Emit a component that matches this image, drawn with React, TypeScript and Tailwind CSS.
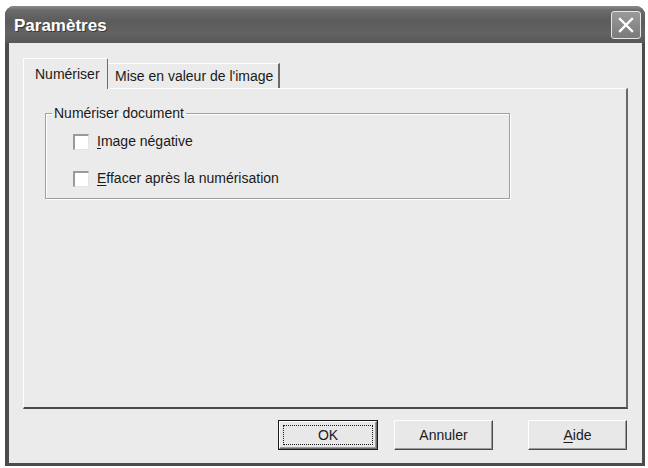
import React from 'react';

const FONT = { fontFamily: '"Liberation Sans", Arial, sans-serif' };

function CheckRow({ mnemonic, rest }: { mnemonic: string; rest: string }) {
  return (
    <div className="flex items-center h-[17px]">
      <div className="w-[16px] h-[16px] bg-white border-t-[2px] border-l-[2px] border-[#9a9a9a] border-r border-b border-r-[#e4e4e4] border-b-[#e4e4e4]" />
      <span className="ml-[8px] text-[14px] leading-[17px] text-[#1a1a1a]">
        <span className="underline underline-offset-2">{mnemonic}</span>
        {rest}
      </span>
    </div>
  );
}

function Button({
  children,
  width,
  isDefault,
}: {
  children: React.ReactNode;
  width: string;
  isDefault?: boolean;
}) {
  if (isDefault) {
    return (
      <div className={`${width} h-[30px] border border-[#1a1a1a] flex`}>
        <div className="flex-1 flex border-t border-l border-white border-r border-b border-r-[#6a6a6a] border-b-[#6a6a6a] bg-[#e8e8e8] shadow-[inset_-1px_-1px_0_#9c9c9c]">
          <div className="flex-1 m-[3px] border border-dotted border-[#1a1a1a] flex items-center justify-center text-[14px] text-[#1a1a1a]">
            {children}
          </div>
        </div>
      </div>
    );
  }
  return (
    <div
      className={`${width} h-[30px] flex items-center justify-center text-[14px] text-[#1a1a1a] bg-[#e8e8e8] border-t border-l border-white border-r border-b border-r-[#4a4a4a] border-b-[#4a4a4a] shadow-[inset_-1px_-1px_0_#9c9c9c]`}
    >
      {children}
    </div>
  );
}

export default function App() {
  return (
    <div className="w-[648px] h-[468px] bg-white pt-[6px] pl-[5px]" style={FONT}>
      <div className="w-[640px] h-[460px] flex flex-col rounded-t-[9px] overflow-hidden bg-[#474747]">
        {/* title bar */}
        <div className="h-[37px] flex items-center justify-between pl-[9px] pr-[4px] bg-[linear-gradient(to_bottom,#8c8c8c_0%,#6a6a6a_12%,#5c5c5c_40%,#626262_75%,#575757_100%)]">
          <span className="text-[17px] font-bold text-white pt-[3px] [text-shadow:1px_1px_0_#3a3a3a]">
            Paramètres
          </span>
          <div className="w-[30px] h-[28px] rounded-[3px] border border-[#e6e6e6] bg-[linear-gradient(to_bottom,#9a9a9a,#7a7a7a)] flex items-center justify-center">
            <svg width="16" height="16" viewBox="0 0 16 16">
              <path d="M2 2 L14 14 M14 2 L2 14" stroke="white" strokeWidth="2.4" strokeLinecap="square" />
            </svg>
          </div>
        </div>

        {/* body */}
        <div className="flex-1 bg-[#ebebeb] border-l-[4px] border-r-[3px] border-b-[3px] border-[#4c4c4c] pl-[14px] pt-[15px]">
          <div className="w-[605px] flex flex-col">
            {/* tabs */}
            <div className="flex items-end h-[30px]">
              <div className="relative z-10 -mb-px w-[85px] h-[31px] bg-[#ebebeb] border-t border-l border-white border-r border-r-[#6a6a6a] rounded-t-[2px] pl-[11px] pt-[5px] text-[14px] text-[#1a1a1a]">
                Numériser
              </div>
              <div className="h-[25px] w-[172px] border-t border-white border-r-[2px] border-r-[#6a6a6a] pl-[7px] pt-[3px] text-[14px] leading-[18px] text-[#1a1a1a] whitespace-nowrap">
                Mise en valeur de l'image
              </div>
            </div>

            {/* panel */}
            <div className="h-[321px] border-t border-l border-white border-r-[2px] border-b-[2px] border-r-[#6a6a6a] border-b-[#4a4a4a] pt-[16px] pl-[21px]">
              <fieldset className="w-[465px] h-[94px] border border-[#a0a0a0] shadow-[1px_1px_0_#ffffff,inset_1px_1px_0_#ffffff] px-[27px]">
                <legend className="ml-[-21px] px-[2px] text-[14px] leading-[16px] text-[#1a1a1a]">
                  Numériser document
                </legend>
                <div className="flex flex-col gap-[20px] pt-[12px]">
                  <CheckRow mnemonic="I" rest="mage négative" />
                  <CheckRow mnemonic="E" rest="ffacer après la numérisation" />
                </div>
              </fieldset>
            </div>

            {/* buttons */}
            <div className="flex justify-end mt-[11px] pr-[1px]">
              <Button width="w-[100px]" isDefault>
                OK
              </Button>
              <div className="ml-[16px]">
                <Button width="w-[99px]">Annuler</Button>
              </div>
              <div className="ml-[35px]">
                <Button width="w-[99px]">
                  <span className="underline underline-offset-2">A</span>ide
                </Button>
              </div>
            </div>
          </div>
        </div>
      </div>
    </div>
  );
}
